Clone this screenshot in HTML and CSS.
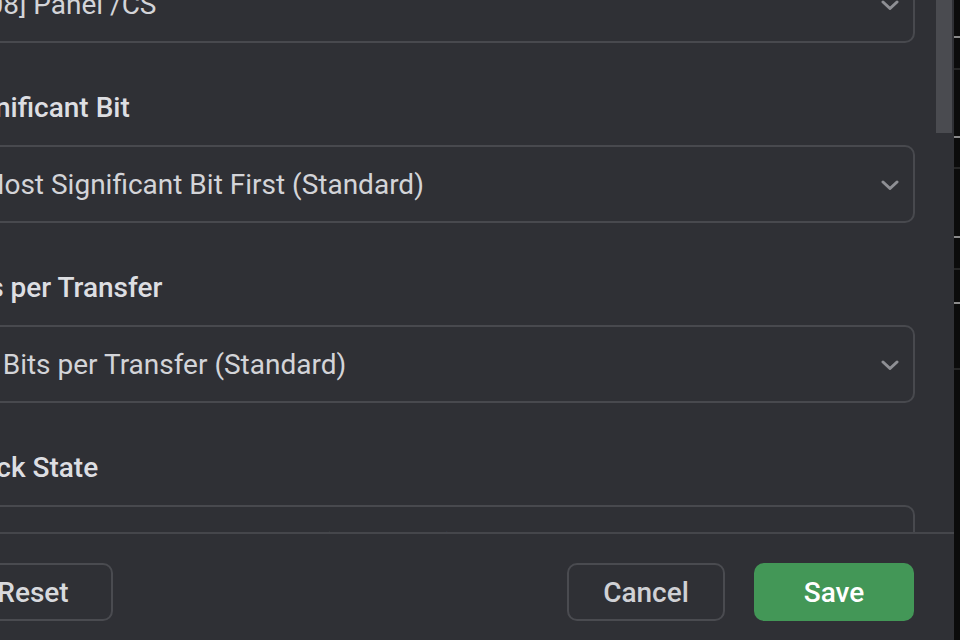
FILE: index.html
```html
<!DOCTYPE html>
<html lang="en">
<head>
<meta charset="utf-8">
<title>SPI Settings</title>
<link rel="stylesheet" href="styles.css">
</head>
<body>
<div class="page">
  <div class="dialog">
    <div class="main">
      <div class="scroll">
        <div class="fields">
          <div class="field">
            <div class="label">Chip Select</div>
            <div class="select"><span class="value">[08] Panel /CS</span><svg class="chev" width="18" height="10" viewBox="0 0 18 10"><path d="M2 2 L9 8.5 L16 2" fill="none" stroke="#8e8f94" stroke-width="3" stroke-linecap="round" stroke-linejoin="round"/></svg></div>
          </div>
          <div class="field">
            <div class="label">Significant Bit</div>
            <div class="select"><span class="value">Most Significant Bit First (Standard)</span><svg class="chev" width="18" height="10" viewBox="0 0 18 10"><path d="M2 2 L9 8.5 L16 2" fill="none" stroke="#8e8f94" stroke-width="3" stroke-linecap="round" stroke-linejoin="round"/></svg></div>
          </div>
          <div class="field">
            <div class="label">Bits per Transfer</div>
            <div class="select"><span class="value">8 Bits per Transfer (Standard)</span><svg class="chev" width="18" height="10" viewBox="0 0 18 10"><path d="M2 2 L9 8.5 L16 2" fill="none" stroke="#8e8f94" stroke-width="3" stroke-linecap="round" stroke-linejoin="round"/></svg></div>
          </div>
          <div class="field">
            <div class="label">Clock State</div>
            <div class="select"><span class="value">Clock is Low when inactive (CPOL = 0)</span><svg class="chev" width="18" height="10" viewBox="0 0 18 10"><path d="M2 2 L9 8.5 L16 2" fill="none" stroke="#8e8f94" stroke-width="3" stroke-linecap="round" stroke-linejoin="round"/></svg></div>
          </div>
        </div>
      </div>
      <div class="track"><div class="thumb"></div></div>
    </div>
    <div class="footer">
      <button class="btn btn-reset">Reset</button>
      <button class="btn btn-cancel">Cancel</button>
      <button class="btn btn-save">Save</button>
    </div>
  </div>
  <div class="backdrop">
    <div class="bl light l1"></div>
    <div class="bl dark d1"></div>
    <div class="bl light l2"></div>
    <div class="bl dark d2"></div>
    <div class="bl light l3"></div>
    <div class="bl dark d3"></div>
    <div class="bl light l4"></div>
    <div class="bl dark d4"></div>
  </div>
</div>
</body>
</html>
```
FILE: styles.css
```css
html, body {
  margin: 0;
  padding: 0;
}
body {
  background: #0b0b0b;
  font-family: Roboto, "Liberation Sans", sans-serif;
  overflow: hidden;
}
.page {
  display: flex;
  width: 960px;
  height: 640px;
  overflow: hidden;
}
.dialog {
  flex: none;
  width: 1041px;
  margin-left: -87px;
  height: 640px;
  background: #2f3035;
  display: flex;
  flex-direction: column;
}
.main {
  flex: 1;
  min-height: 0;
  display: flex;
  overflow: hidden;
}
.scroll {
  flex: 1;
  overflow: hidden;
  padding: 0 21px 0 42px;
}
.fields {
  margin-top: -88px;
  display: flex;
  flex-direction: column;
  gap: 49px;
}
.label {
  font-size: 28px;
  line-height: 32px;
  font-weight: 500;
  color: #dddee2;
  margin-bottom: 21px;
  white-space: nowrap;
}
.select {
  height: 78px;
  box-sizing: border-box;
  border: 2px solid #48494e;
  border-radius: 10px;
  display: flex;
  align-items: center;
  justify-content: space-between;
  padding: 0 14px 0 23px;
  overflow: hidden;
}
.value {
  font-size: 28px;
  color: #d3d4d8;
  white-space: nowrap;
}
.chev {
  flex: none;
  margin-top: 2px;
}
.track {
  flex: none;
  width: 18px;
}
.thumb {
  width: 16px;
  height: 133px;
  background: #4a4b50;
}
.footer {
  flex: none;
  height: 108px;
  box-sizing: border-box;
  border-top: 2px solid #45464b;
  display: flex;
  align-items: flex-start;
  padding: 29px 40px 0 40px;
}
.btn {
  height: 58px;
  box-sizing: border-box;
  border-radius: 10px;
  font-family: Roboto, "Liberation Sans", sans-serif;
  font-size: 28px;
  font-weight: 500;
  padding: 0;
  cursor: pointer;
}
.btn-reset {
  width: 160px;
  background: transparent;
  border: 2px solid #4a4b50;
  color: #d8d9dd;
}
.btn-cancel {
  width: 158px;
  margin-left: auto;
  background: transparent;
  border: 2px solid #4a4b50;
  color: #d0d1d5;
}
.btn-save {
  width: 160px;
  margin-left: 29px;
  background: #439757;
  border: none;
  color: #ffffff;
}
.backdrop {
  flex: none;
  width: 6px;
  background: #0b0b0b;
  display: flex;
  flex-direction: column;
}
.bl {
  height: 2px;
  flex: none;
}
.light { background: #8a8a8a; }
.dark { background: #262626; }
.l1 { margin-top: 36px; }
.d1 { margin-top: 30px; }
.l2 { margin-top: 66px; }
.d2 { margin-top: 29px; }
.l3 { margin-top: 67px; }
.d3 { margin-top: 30px; }
.l4 { margin-top: 32px; }
.d4 { margin-top: 64px; }
```
